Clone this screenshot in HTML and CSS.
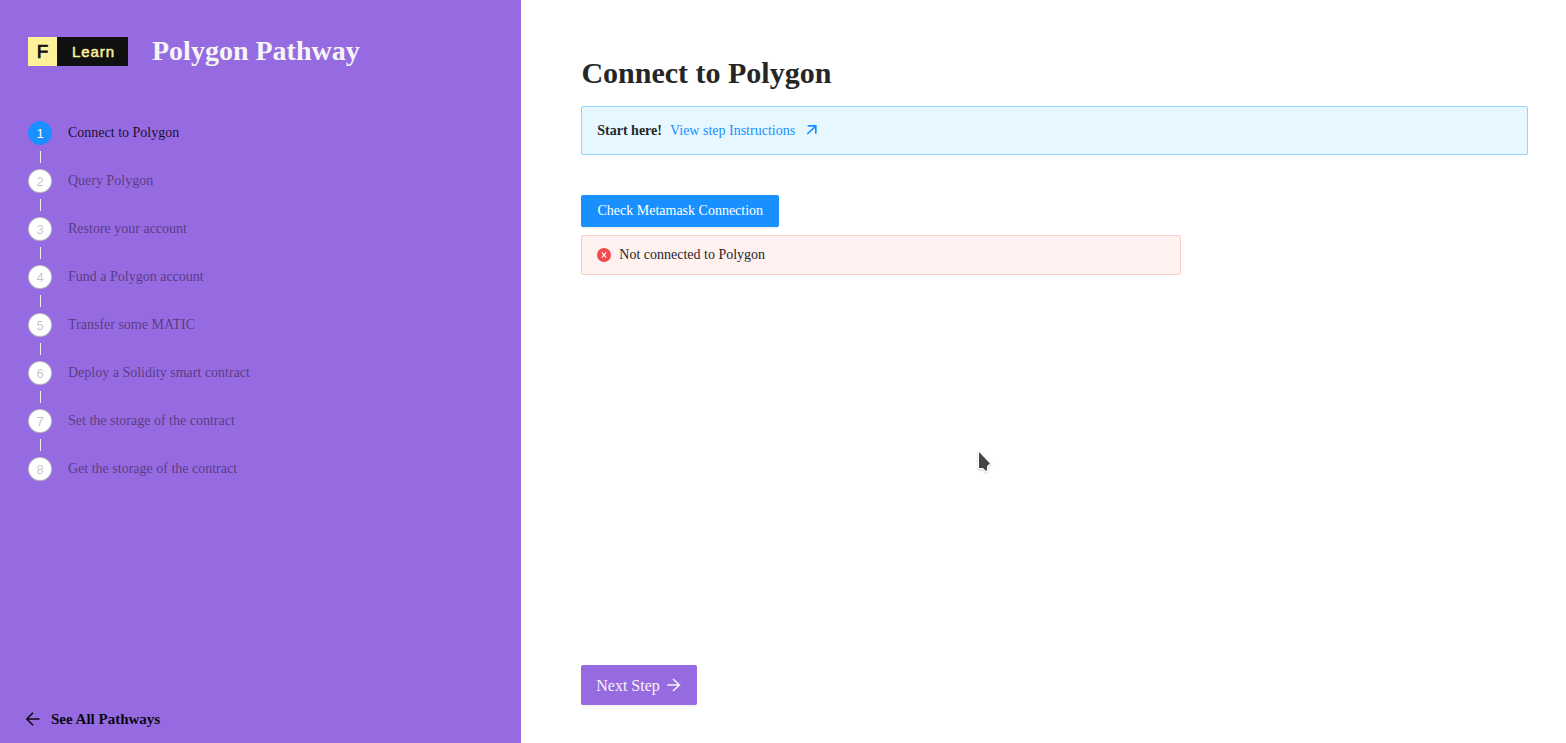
FILE: index.html
```html
<!DOCTYPE html>
<html lang="en">
<head>
<meta charset="utf-8">
<title>Polygon Pathway</title>
<link rel="stylesheet" href="styles.css">
</head>
<body>
<div class="layout">
  <aside class="sidebar">
    <header class="brand">
      <div class="logo"><span class="logo-mark">F</span><span class="logo-name">Learn</span></div>
      <div class="brand-title">Polygon Pathway</div>
    </header>
    <ol class="steps">
      <li class="step active"><span class="step-number">1</span><span class="step-title">Connect to Polygon</span></li>
      <li class="step"><span class="step-number">2</span><span class="step-title">Query Polygon</span></li>
      <li class="step"><span class="step-number">3</span><span class="step-title">Restore your account</span></li>
      <li class="step"><span class="step-number">4</span><span class="step-title">Fund a Polygon account</span></li>
      <li class="step"><span class="step-number">5</span><span class="step-title">Transfer some MATIC</span></li>
      <li class="step"><span class="step-number">6</span><span class="step-title">Deploy a Solidity smart contract</span></li>
      <li class="step"><span class="step-number">7</span><span class="step-title">Set the storage of the contract</span></li>
      <li class="step"><span class="step-number">8</span><span class="step-title">Get the storage of the contract</span></li>
    </ol>
    <a class="all-pathways">
      <svg width="16" height="16" viewBox="0 0 16 16" fill="none" stroke="currentColor" stroke-width="1.5"><path d="M14.5 8H2M8 1.8 1.8 8 8 14.2"/></svg>
      <span>See All Pathways</span>
    </a>
  </aside>
  <main class="content">
    <h1 class="title">Connect to Polygon</h1>
    <div class="alert info">
      <strong>Start here!</strong>
      <a class="link">View step Instructions</a>
      <svg class="link-icon" width="12" height="12" viewBox="0 0 12 12" fill="none" stroke="currentColor" stroke-width="1.7"><path d="M1.7 1.9h8.1v7.9M9.7 2.1 1.3 10"/></svg>
    </div>
    <button class="button check">Check Metamask Connection</button>
    <div class="alert error">
      <svg width="14" height="14" viewBox="0 0 14 14"><circle cx="7" cy="7" r="7" fill="#f04a4e"/><path d="M4.8 4.3 9.2 9.7M9.2 4.3 4.8 9.7" stroke="#fff1f0" stroke-width="1.2"/></svg>
      <span>Not connected to Polygon</span>
    </div>
    <button class="button next">
      <span class="next-label">Next Step</span>
      <svg width="16" height="16" viewBox="0 0 16 16" fill="none" stroke="currentColor" stroke-width="1.6"><path d="M1.2 8H13M7 2 13.4 8 7 14"/></svg>
    </button>
  </main>
  <svg class="cursor" width="16" height="24" viewBox="0 0 16 24"><path d="M2 2v16h4l3 3 1-1v-4l3-2.5z" fill="#444" stroke="#fff" stroke-width="2" paint-order="stroke"/></svg>
</div>
</body>
</html>
```

FILE: styles.css
```css
* { box-sizing: border-box; }

body {
  margin: 0;
  font: 14px/22px "Liberation Serif", "Times New Roman", serif;
  color: #262626;
  background: #fff;
}

.layout {
  position: relative;
  display: flex;
  height: 743px;
  overflow: hidden;
}

.sidebar {
  display: flex;
  flex-direction: column;
  flex: 0 0 521px;
  padding: 29px 24px 13px 28px;
  background: #966ae0;
}

.brand {
  display: flex;
  align-items: center;
  gap: 24px;
  height: 44px;
}

.logo {
  display: flex;
  width: 100px;
  height: 29px;
  font-family: "Liberation Sans", Arial, sans-serif;
  line-height: 29px;
  text-align: center;
}

.logo-mark {
  width: 29px;
  background: #fff09a;
  color: #111;
  font-size: 19px;
  -webkit-text-stroke: .7px;
  line-height: 30px;
}

.logo-name {
  flex: 1;
  background: #101010;
  color: #fff09a;
  padding-left: 2px;
  font-size: 15px;
  -webkit-text-stroke: .5px;
  letter-spacing: .9px;
}

.brand-title {
  color: #f5f5f5;
  font-size: 28px;
  font-weight: 700;
}

.steps {
  display: flex;
  flex-direction: column;
  gap: 24px;
  margin: 48px 0 0;
  padding: 0;
  list-style: none;
}

.step {
  position: relative;
  display: flex;
  gap: 16px;
  height: 24px;
  color: rgba(0, 0, 0, .45);
}

.step-title { line-height: 24px; }

.step:not(:last-child)::after {
  content: "";
  position: absolute;
  left: 12px;
  top: 30px;
  width: 1px;
  height: 12px;
  background: #f0f0f0;
}

.step-number {
  width: 24px;
  height: 24px;
  border: 1px solid rgba(0, 0, 0, .25);
  border-radius: 50%;
  background: #fff;
  color: rgba(0, 0, 0, .25);
  font: 13px/24px "Liberation Sans", Arial, sans-serif;
  text-align: center;
}

.active { color: rgba(0, 0, 0, .85); }

.active .step-number {
  border-color: #1890ff;
  background: #1890ff;
  color: #fff;
}

.all-pathways {
  display: flex;
  align-items: center;
  gap: 10px;
  margin: auto 0 0 -3px;
  color: #0b0713;
  font-size: 15px;
  font-weight: 700;
}

.content {
  display: flex;
  flex: 1;
  flex-direction: column;
  align-items: flex-start;
  padding: 54px 38px 38px 60px;
}

.title {
  margin: 0 0 14px;
  padding-left: .4px;
  font-size: 30px;
  line-height: 38px;
}

.alert {
  display: flex;
  align-items: center;
  gap: 8px;
  padding: 0 15px;
  border: 1px solid;
  border-radius: 2px;
}

.info {
  align-self: stretch;
  height: 49px;
  margin-bottom: 40px;
  padding-left: 15.3px;
  border-color: #91d5ff;
  background: #e6f7ff;
}

.link, .link-icon { color: #1890ff; }
.link-icon { margin: 0 0 2px 3px; }

.error {
  width: 600px;
  height: 40px;
  margin-top: 8px;
  gap: 8.3px;
  border-color: #ffccc7;
  background: #fff1f0;
}

.button {
  display: flex;
  align-items: center;
  justify-content: center;
  border: 0;
  border-radius: 2px;
  padding: 0;
  color: #fff;
  font: inherit;
  box-shadow: 0 2px 0 rgba(0, 0, 0, .043);
}

.check {
  width: 198px;
  height: 32px;
  padding-left: .6px;
  background: #1890ff;
}

.next {
  gap: 6px;
  width: 116px;
  height: 40px;
  margin-top: auto;
  background: #966ae0;
  color: #f5f5f5;
  font-size: 16px;
}

.next-label { padding-top: 2px; }

.cursor {
  position: absolute;
  left: 977px;
  top: 450px;
  filter: drop-shadow(0 1px 1px rgba(0, 0, 0, .2));
}
```
